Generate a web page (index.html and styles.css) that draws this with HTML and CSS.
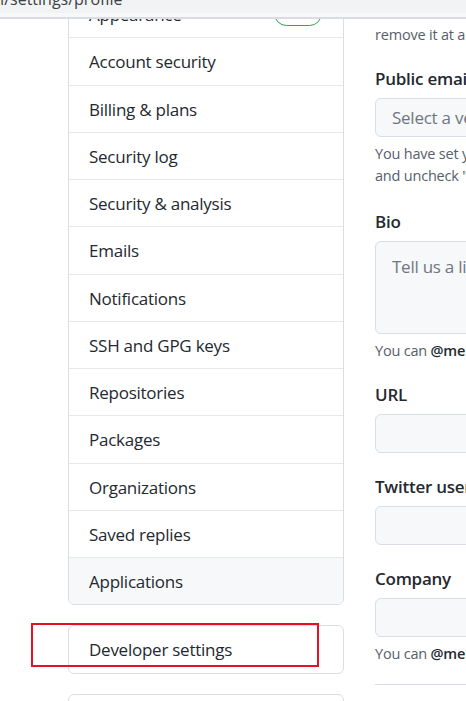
FILE: index.html
```html
<!DOCTYPE html>
<html lang="en">
<head>
<meta charset="utf-8">
<title>Settings</title>
<link rel="stylesheet" href="styles.css">
</head>
<body>
<div class="urlbar"><span class="url">github.com/settings/profile</span></div>
<div class="strip"></div>
<div class="rule"></div>
<div class="viewport">
  <div class="layout">
    <aside class="sidebar">
      <nav class="menu">
        <a class="menu-item">Appearance <span class="badge">Beta</span></a>
        <a class="menu-item">Account security</a>
        <a class="menu-item">Billing &amp; plans</a>
        <a class="menu-item">Security log</a>
        <a class="menu-item">Security &amp; analysis</a>
        <a class="menu-item">Emails</a>
        <a class="menu-item">Notifications</a>
        <a class="menu-item">SSH and GPG keys</a>
        <a class="menu-item">Repositories</a>
        <a class="menu-item">Packages</a>
        <a class="menu-item">Organizations</a>
        <a class="menu-item">Saved replies</a>
        <a class="menu-item active">Applications</a>
      </nav>
      <nav class="menu">
        <a class="menu-item">Developer settings</a>
      </nav>
      <nav class="menu">
        <a class="menu-item">Moderation settings</a>
      </nav>
    </aside>
    <main class="main">
      <p class="note">remove it at any time.</p>
      <div class="group g-email">
        <div class="label">Public email</div>
        <div class="field">Select a verified email to display</div>
        <p class="note note-after">You have set your email address to private. To toggle email privacy, go to<br>and uncheck "Keep my email address private".</p>
      </div>
      <div class="group g-bio">
        <div class="label">Bio</div>
        <div class="field area">Tell us a little bit about yourself</div>
        <p class="note note-after">You can <b>@mention</b> other users and organizations to link to them.</p>
      </div>
      <div class="group g-url">
        <div class="label">URL</div>
        <div class="field"></div>
      </div>
      <div class="group g-tw">
        <div class="label">Twitter username</div>
        <div class="field"></div>
      </div>
      <div class="group g-co">
        <div class="label">Company</div>
        <div class="field"></div>
        <p class="note note-after">You can <b>@mention</b> your company's GitHub organization to link it.</p>
      </div>
      <hr class="divider">
    </main>
  </div>
</div>
<div class="highlight"></div>
</body>
</html>
```
FILE: styles.css
```css
html, body {
  margin: 0;
  padding: 0;
}
body {
  width: 466px;
  height: 701px;
  overflow: hidden;
  background: #ffffff;
  font-family: "Open Sans", "Noto Sans", sans-serif;
  color: #24292f;
  position: relative;
}
.urlbar {
  height: 13px;
  background: #f1f3f4;
  overflow: hidden;
}
.url {
  display: block;
  margin-top: -11px;
  margin-left: -80px;
  font-size: 16px;
  line-height: 20px;
  color: #3c4043;
  white-space: nowrap;
}
.strip {
  height: 4px;
  background: #f7f8f9;
}
.rule {
  height: 2px;
  background: #dadce0;
}
.viewport {
  height: 682px;
  overflow: hidden;
}
.layout {
  display: flex;
  gap: 31px;
  margin-top: -29px;
  padding-left: 68px;
}
.sidebar {
  flex: none;
  width: 276px;
  display: flex;
  flex-direction: column;
  gap: 20px;
}
.menu {
  border: 1px solid #d8dee4;
  border-radius: 6px;
  overflow: hidden;
}
.menu-item {
  display: flex;
  align-items: center;
  justify-content: space-between;
  height: 47.25px;
  padding: 1px 21px 0 20px;
  box-sizing: border-box;
  font-size: 17px;
  letter-spacing: -0.25px;
  color: #24292f;
  border-top: 1px solid #e6e9ec;
}
.menu-item:first-child {
  border-top: none;
  height: 46.25px;
}
.menu-item.active {
  background: #f6f8fa;
}
.badge {
  display: inline-flex;
  align-items: center;
  justify-content: center;
  width: 48px;
  height: 25px;
  padding-bottom: 5px;
  margin-top: -2px;
  box-sizing: border-box;
  border: 1px solid #2da44e;
  border-radius: 13px;
  font-size: 14px;
  line-height: 16px;
  letter-spacing: 0;
  color: #1a7f37;
}
.main {
  flex: none;
  width: 600px;
  padding-top: 34px;
}
.note {
  margin: 0;
  font-size: 14.5px;
  letter-spacing: -0.2px;
  line-height: 22px;
  color: #57606a;
}
.note b {
  color: #24292f;
  font-weight: 600;
}
.note-after {
  margin-top: 6px;
}
.label {
  font-size: 17px;
  letter-spacing: -0.25px;
  font-weight: 600;
  line-height: 25px;
  margin-bottom: 7px;
  color: #24292f;
}
.field {
  display: flex;
  align-items: center;
  height: 39px;
  box-sizing: border-box;
  padding: 0 16px;
  border: 1px solid #d8dee4;
  border-radius: 6px;
  background: #f6f8fa;
  font-size: 17px;
  letter-spacing: -0.25px;
  color: #6e7781;
}
.field.area {
  height: 93px;
  align-items: flex-start;
  padding-top: 12px;
  line-height: 25px;
}
.g-email { margin-top: 20px; }
.g-bio { margin-top: 22px; }
.g-url { margin-top: 20px; }
.g-tw { margin-top: 21px; }
.g-co { margin-top: 21px; }
.divider {
  margin: 19px 0 0;
  border: none;
  border-top: 1px solid #d8dee4;
}
.highlight {
  position: absolute;
  left: 31px;
  top: 623px;
  width: 288px;
  height: 44px;
  box-sizing: border-box;
  border: 2px solid #e81123;
}
```
